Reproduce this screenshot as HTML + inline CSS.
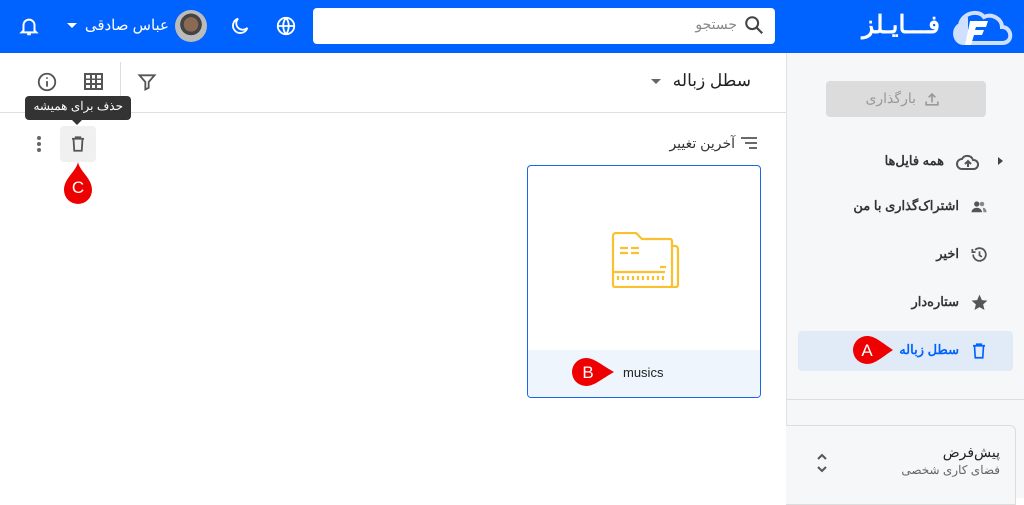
<!DOCTYPE html>
<html><head><meta charset="utf-8"><style>
*{margin:0;padding:0;box-sizing:border-box}
body{width:1024px;height:498px;overflow:hidden;background:#fff;font-family:"Liberation Sans","Noto Sans CJK SC",sans-serif;position:relative;color:#333}
.a{position:absolute}
.t{position:absolute;white-space:nowrap;direction:rtl}
</style></head><body>
<div class="a" style="left:0;top:0;width:1024px;height:53px;background:#0062ff"></div>
<!-- logo -->
<svg class="a" style="left:950px;top:7px" width="64" height="40" viewBox="0 0 64 40">
<path d="M14 36 C4 36 2 22 10 18 C12 6 28 2 34 10 C42 6 52 12 52 20 C62 20 64 36 52 36 Z" fill="none" stroke="#cfe0ff" stroke-width="4"/>
<path d="M14 36 C4 36 2 22 10 18 C11 14 14 11 18 10 L18 36Z" fill="#cfe0ff"/>
<path d="M20 14 H38 L36 20 H26 L25 23 H34 L32 28 H24 L21 38 H15 Z" fill="#fff"/>
</svg>
<div class="t" style="right:84px;top:10px;font-size:25px;font-weight:bold;color:#fff">فـــایـلز</div>
<!-- search -->
<div class="a" style="left:313px;top:8px;width:462px;height:36px;background:#fff;border-radius:4px"></div>
<svg class="a" style="left:743px;top:14px" width="22" height="22" viewBox="0 0 24 24"><circle cx="10" cy="10" r="6.5" fill="none" stroke="#444" stroke-width="2.2"/><path d="M15 15l6 6" stroke="#444" stroke-width="2.4"/></svg>
<div class="t" style="right:287px;top:16px;font-size:14px;color:#888">جستجو</div>
<!-- header left icons -->
<svg class="a" style="left:275px;top:15px" width="22" height="22" viewBox="0 0 24 24" fill="none" stroke="#fff" stroke-width="2"><circle cx="12" cy="12" r="9"/><path d="M3 12h18M12 3c-4 5-4 13 0 18M12 3c4 5 4 13 0 18"/></svg>
<svg class="a" style="left:229px;top:15px" width="22" height="22" viewBox="0 0 24 24" fill="none" stroke="#fff" stroke-width="2"><path d="M10 4a8 8 0 1 0 10 10A7 7 0 0 1 10 4z"/></svg>
<div class="a" style="left:175px;top:10px;width:32px;height:32px;border-radius:50%;background:radial-gradient(circle at 50% 45%,#8a6a55 0 30%,#444 31% 45%,#bbb 46%)"></div>
<div class="t" style="right:855px;top:16px;font-size:15px;color:#fff">عباس صادقی</div>
<div class="a" style="left:67px;top:23px;border:5px solid transparent;border-top:5px solid #fff"></div>
<svg class="a" style="left:18px;top:14px" width="22" height="24" viewBox="0 0 24 24" fill="none" stroke="#fff" stroke-width="2.2"><path d="M6 17V11a6 6 0 0 1 12 0v6l2 2H4z"/><path d="M10 21h4"/></svg>
<!-- sidebar -->
<div class="a" style="left:786px;top:53px;width:238px;height:445px;background:#f6f7f9;border-left:1px solid #e2e2e2"></div>
<div class="a" style="left:826px;top:81px;width:160px;height:36px;background:#dcdcdc;border-radius:4px"></div>
<svg class="a" style="left:922px;top:89px" width="20" height="20" viewBox="0 0 24 24" fill="none" stroke="#999" stroke-width="2"><path d="M12 16V6M8 10l4-4 4 4M5 15v4h14v-4"/></svg>
<div class="t" style="right:108px;top:90px;font-size:14px;color:#999">بارگذاری</div>
<div class="a" style="left:998px;top:157px;border:4px solid transparent;border-left:5px solid #444"></div>
<svg class="a" style="left:956px;top:152px" width="24" height="20" viewBox="0 0 24 20" fill="none" stroke="#555" stroke-width="2"><path d="M6 17a5 5 0 0 1 0-10 6 6 0 0 1 11 1 4.5 4.5 0 0 1 1 9z"/><path d="M12 15V9M9 12l3-3 3 3"/></svg>
<div class="t" style="right:80px;top:153px;font-size:13px;font-weight:bold;color:#333">همه فایل‌ها</div>
<svg class="a" style="left:970px;top:198px" width="18" height="18" viewBox="0 0 24 24" fill="#555"><circle cx="9" cy="8" r="3.5"/><path d="M2 19c0-4 4-6 7-6s7 2 7 6z"/><circle cx="16" cy="8" r="3" fill="#888"/><path d="M17 13c3 0 5 2 5 6h-4" fill="#888"/></svg>
<div class="t" style="right:65px;top:198px;font-size:13px;font-weight:bold;color:#333">اشتراک‌گذاری با من</div>
<svg class="a" style="left:970px;top:245px" width="19" height="19" viewBox="0 0 24 24" fill="none" stroke="#555" stroke-width="2.2"><path d="M4 12a8 8 0 1 0 2.5-5.8"/><path d="M3 5v4h4M12 8v5l3 2"/></svg>
<div class="t" style="right:65px;top:246px;font-size:13px;font-weight:bold;color:#333">اخیر</div>
<svg class="a" style="left:970px;top:293px" width="19" height="19" viewBox="0 0 24 24" fill="#555"><path d="M12 2l3 7 7 .6-5.4 4.7 1.7 7.2L12 17.8 5.7 21.5l1.7-7.2L2 9.6 9 9z"/></svg>
<div class="t" style="right:65px;top:294px;font-size:13px;font-weight:bold;color:#333">ستاره‌دار</div>
<div class="a" style="left:798px;top:331px;width:215px;height:40px;background:#e1ebf7;border-radius:4px"></div>
<svg class="a" style="left:970px;top:341px" width="18" height="20" viewBox="0 0 24 24" fill="none" stroke="#0062ff" stroke-width="2.2"><path d="M4 5h16M9 5V3h6v2M6 5l1 16h10l1-16"/></svg>
<div class="t" style="right:65px;top:342px;font-size:13px;font-weight:bold;color:#0062ff">سطل زباله</div>
<!-- A marker -->
<svg class="a" style="left:849px;top:334px" width="46" height="32" viewBox="0 0 46 32"><path d="M18 2 C26 2 32 8 44 16 C32 24 26 30 18 30 A14 14 0 0 1 18 2z" fill="#e00"/><text x="18" y="22" font-size="17" fill="#fff" text-anchor="middle" font-family="Liberation Sans">A</text></svg>
<div class="a" style="left:786px;top:399px;width:238px;height:1px;background:#ddd"></div>
<div class="a" style="left:786px;top:425px;width:230px;height:80px;border:1px solid #ddd;border-left:none;border-radius:0 6px 0 0;background:#f6f7f9"></div>
<div class="t" style="right:24px;top:444px;font-size:14px;color:#222">پیش‌فرض</div>
<div class="t" style="right:24px;top:463px;font-size:12px;color:#666">فضای کاری شخصی</div>
<svg class="a" style="left:815px;top:452px" width="14" height="22" viewBox="0 0 14 22" fill="none" stroke="#555" stroke-width="2"><path d="M3 7l4-4 4 4M3 15l4 4 4-4"/></svg>
<!-- toolbar -->
<div class="a" style="left:0;top:112px;width:786px;height:1px;background:#e0e0e0"></div>
<div class="t" style="right:273px;top:71px;font-size:17px;color:#222">سطل زباله</div>
<div class="a" style="left:651px;top:79px;border:5px solid transparent;border-top:5px solid #666"></div>
<svg class="a" style="left:137px;top:72px" width="20" height="20" viewBox="0 0 24 24" fill="none" stroke="#555" stroke-width="2.2"><path d="M3 4h18l-7 8v7l-4 2v-9z"/></svg>
<div class="a" style="left:120px;top:62px;width:1px;height:40px;background:#ddd"></div>
<svg class="a" style="left:84px;top:73px" width="19" height="17" viewBox="0 0 19 17" fill="#555"><path d="M0 0h19v17H0z M2 2v3.5h4V2z M8 2v3.5h3V2z M13 2v3.5h4V2z M2 7v3h4V7z M8 7v3h3V7z M13 7v3h4V7z M2 12v3h4v-3z M8 12v3h3v-3z M13 12v3h4v-3z" fill-rule="evenodd"/></svg>
<svg class="a" style="left:36px;top:71px" width="22" height="22" viewBox="0 0 24 24" fill="none" stroke="#555" stroke-width="2"><circle cx="12" cy="12" r="9"/><path d="M12 11v6M12 7v1.5"/></svg>
<!-- tooltip -->
<div class="a" style="left:25px;top:96px;width:106px;height:24px;background:#333;border-radius:4px"></div>
<div class="a" style="left:72px;top:120px;border:5px solid transparent;border-top:5px solid #333"></div>
<div class="t" style="right:901px;top:99px;font-size:12px;color:#fff">حذف برای همیشه</div>
<div class="a" style="left:60px;top:126px;width:36px;height:36px;background:#f0f0f0;border-radius:4px"></div>
<svg class="a" style="left:69px;top:135px" width="18" height="18" viewBox="0 0 24 24" fill="none" stroke="#555" stroke-width="2.4"><path d="M4 5h16M9 5V3h6v2M6 5l1 16h10l1-16"/></svg>
<div class="a" style="left:37px;top:136px;width:4px;height:4px;border-radius:2px;background:#666;box-shadow:0 6px #666,0 12px #666"></div>
<svg class="a" style="left:62px;top:160px" width="32" height="46" viewBox="0 0 32 46"><path d="M16 2 C18 12 30 18 30 30 A14 14 0 0 1 2 30 C2 18 14 12 16 2z" fill="#e00"/><text x="16" y="33" font-size="17" fill="#fff" text-anchor="middle" font-family="Liberation Sans">C</text></svg>
<!-- sort -->
<svg class="a" style="left:740px;top:136px" width="18" height="14" viewBox="0 0 18 14" stroke="#555" stroke-width="1.8"><path d="M1 2h16M5 7h12M9 12h8"/></svg>
<div class="t" style="right:289px;top:135px;font-size:14px;color:#333">آخرین تغییر</div>
<!-- card -->
<div class="a" style="left:527px;top:165px;width:234px;height:233px;border:1px solid #1a66e8;border-radius:4px;overflow:hidden">
<div class="a" style="left:0;top:184px;width:232px;height:48px;background:#eef5fd"></div>
</div>
<svg class="a" style="left:610px;top:232px" width="72" height="56" viewBox="0 0 72 56" fill="none" stroke="#fbc02d" stroke-width="2.2"><path d="M3 4a3 3 0 0 1 3-3h20l6 6h28a2 2 0 0 1 2 2v44a2 2 0 0 1-2 2H5a2 2 0 0 1-2-2z"/><path d="M62 14h3a3 3 0 0 1 3 3v36a2 2 0 0 1-2 2h-6"/><path d="M3 40h52M10 16h8M21 16h8M10 21h8M21 21h8M50 35h6M8 44v4M13 44v4M18 44v4M23 44v4M28 44v4M33 44v4M38 44v4M43 44v4M48 44v4M53 44v4"/></svg>
<div class="a" style="left:623px;top:365px;font-size:13px;color:#222">musics</div>
<svg class="a" style="left:570px;top:357px" width="46" height="30" viewBox="0 0 46 30"><path d="M16 1 C24 1 30 7 44 15 C30 23 24 29 16 29 A14 14 0 0 1 16 1z" fill="#e00"/><text x="18" y="21" font-size="17" fill="#fff" text-anchor="middle" font-family="Liberation Sans">B</text></svg>
</body></html>
